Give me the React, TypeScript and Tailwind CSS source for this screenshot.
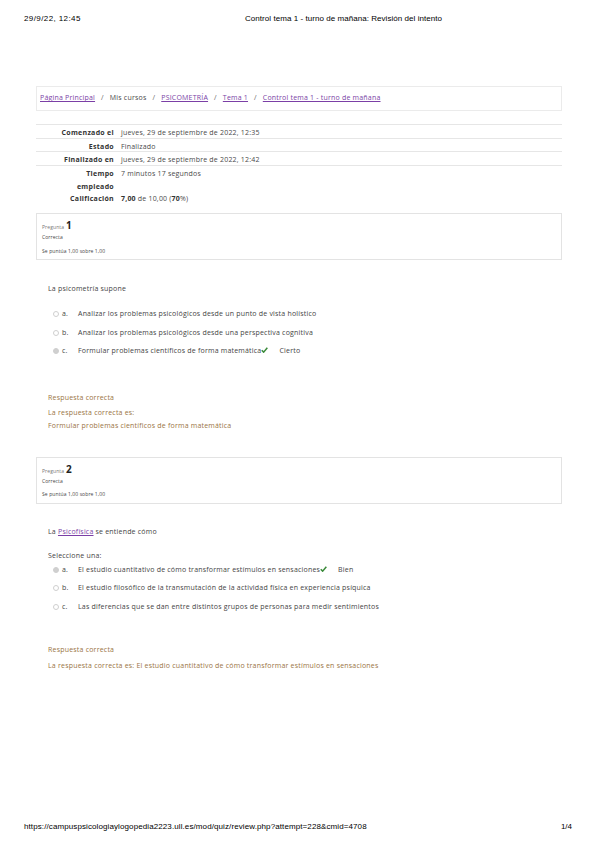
import React from "react";

const purple = "text-[#7b3fa6] underline";
const brown = "text-[#9a7444]";

const Radio = ({ checked }: { checked?: boolean }) => (
  <span
    className={`inline-block w-[6px] h-[6px] rounded-full border border-[#cfcfcf] shrink-0 ${
      checked ? "bg-[#d0d0d0]" : "bg-white"
    }`}
  />
);

const Check = () => (
  <svg width="7" height="6" viewBox="0 0 8 7" className="inline-block -mt-[2px]">
    <path d="M0.8 3.8 L3 6 L7.3 1" fill="none" stroke="#3b8a3a" strokeWidth="1.8" />
  </svg>
);

type Opt = { letter: string; text: string; checked?: boolean; tag?: string };

const Options = ({ opts }: { opts: Opt[] }) => (
  <div className="flex flex-col">
    {opts.map((o) => (
      <div key={o.letter} className="flex items-center h-[18.5px] pl-[5px]">
        <Radio checked={o.checked} />
        <span className="w-[19px] pl-[3px]">{o.letter}</span>
        <span>
          {o.text}
          {o.tag && <Check />}
        </span>
        {o.tag && <span className="ml-[11px]">{o.tag}</span>}
      </div>
    ))}
  </div>
);

const QuestionInfo = ({ n }: { n: number }) => (
  <div className="border border-[#e3e3e3] h-[47px] px-[5px] pt-[5px] text-[5px] tracking-[0.1px] text-[#444] leading-[13.5px]">
    <div className="flex items-baseline h-[12px]">
      <span className="text-[#777]">Pregunta</span>
      <span className="ml-[2px] text-[10px] font-bold text-[#222]">{n}</span>
    </div>
    <div>Correcta</div>
    <div>Se puntúa 1,00 sobre 1,00</div>
  </div>
);

const rows: { label: React.ReactNode; value: React.ReactNode; h: string }[] = [
  { label: "Comenzado el", value: "jueves, 29 de septiembre de 2022, 12:35", h: "h-[14px]" },
  { label: "Estado", value: "Finalizado", h: "h-[13px]" },
  { label: "Finalizado en", value: "jueves, 29 de septiembre de 2022, 12:42", h: "h-[14px]" },
  {
    label: (
      <>
        Tiempo
        <br />
        empleado
      </>
    ),
    value: "7 minutos 17 segundos",
    h: "h-[26px]",
  },
  {
    label: "Calificación",
    value: (
      <>
        <b className="text-[#333]">7,00</b> de 10,00 (<b className="text-[#333]">70</b>%)
      </>
    ),
    h: "h-[15px]",
  },
];

export default function App() {
  return (
    <div className="w-[599px] h-[848px] bg-white flex flex-col relative overflow-hidden">
      {/* print header */}
      <div className="flex mt-[14px] h-[9px] leading-[9px] text-[8px] text-black px-[24px] [font-family:'Liberation_Sans',Arial,sans-serif]">
        <span className="w-[221px] tracking-[0.4px]">29/9/22, 12:45</span>
        <span className="tracking-[0.05px]">Control tema 1 - turno de mañana: Revisión del intento</span>
      </div>

      <div className="ml-[36px] w-[526px] text-[7px] tracking-[0.2px] text-[#4a4a4a] [font-family:'Open_Sans',Lato,sans-serif]">
        {/* breadcrumb */}
        <div className="mt-[63px] h-[25px] border border-[#ebebeb] flex items-center px-[3px] gap-[6px]">
          <span className={purple}>Página Principal</span>
          <span className="text-[#666]">/</span>
          <span>Mis cursos</span>
          <span className="text-[#666]">/</span>
          <span className={purple}>PSICOMETRÍA</span>
          <span className="text-[#666]">/</span>
          <span className={purple}>Tema 1</span>
          <span className="text-[#666]">/</span>
          <span className={purple}>Control tema 1 - turno de mañana</span>
        </div>

        {/* summary table */}
        <div className="mt-[13px] flex flex-col">
          {rows.map((r, i) => (
            <div
              key={i}
              className={`flex ${r.h} leading-[13px] pt-[1px] ${i < 4 ? "border-t border-[#e6e6e6]" : ""}`}
            >
              <div className="w-[80px] text-right font-bold tracking-[0.3px] text-[#333] pr-[2px]">{r.label}</div>
              <div className="pl-[5px]">{r.value}</div>
            </div>
          ))}
        </div>

        {/* question 1 */}
        <div className="mt-[7px]">
          <QuestionInfo n={1} />
        </div>
        <div className="pl-[12px] text-[#444]">
          <div className="mt-[23px] h-[12px] leading-[12px]">La psicometría supone</div>
          <div className="mt-[10px]">
            <Options
              opts={[
                { letter: "a.", text: "Analizar los problemas psicológicos desde un punto de vista holístico" },
                { letter: "b.", text: "Analizar los problemas psicológicos desde una perspectiva cognitiva" },
                { letter: "c.", text: "Formular problemas científicos de forma matemática", checked: true, tag: "Cierto" },
              ]}
            />
          </div>
          <div className={`${brown} mt-[30px] leading-[13px]`}>
            <div className="mb-[2px]">Respuesta correcta</div>
            <div>La respuesta correcta es:</div>
            <div>Formular problemas científicos de forma matemática</div>
          </div>
        </div>

        {/* question 2 */}
        <div className="mt-[25px]">
          <QuestionInfo n={2} />
        </div>
        <div className="pl-[12px] text-[#444]">
          <div className="mt-[22px] h-[12px] leading-[12px]">
            La <span className={purple}>Psicofísica</span> se entiende cómo
          </div>
          <div className="mt-[12px] h-[12px] leading-[12px]">Seleccione una:</div>
          <div className="-mt-[1px]">
            <Options
              opts={[
                {
                  letter: "a.",
                  text: "El estudio cuantitativo de cómo transformar estímulos en sensaciones",
                  checked: true,
                  tag: "Bien",
                },
                { letter: "b.", text: "El estudio filosófico de la transmutación de la actividad física en experiencia psíquica" },
                { letter: "c.", text: "Las diferencias que se dan entre distintos grupos de personas para medir sentimientos" },
              ]}
            />
          </div>
          <div className={`${brown} mt-[27px] leading-[13px]`}>
            <div className="mb-[3px]">Respuesta correcta</div>
            <div>La respuesta correcta es: El estudio cuantitativo de cómo transformar estímulos en sensaciones</div>
          </div>
        </div>
      </div>

      {/* print footer */}
      <div className="mt-auto mb-[17px] flex justify-between h-[9px] leading-[9px] text-[8px] text-black pl-[24px] pr-[27px] [font-family:'Liberation_Sans',Arial,sans-serif]">
        <span className="tracking-[0.1px]">
          https://campuspsicologiaylogopedia2223.ull.es/mod/quiz/review.php?attempt=228&amp;cmid=4708
        </span>
        <span>1/4</span>
      </div>
    </div>
  );
}
